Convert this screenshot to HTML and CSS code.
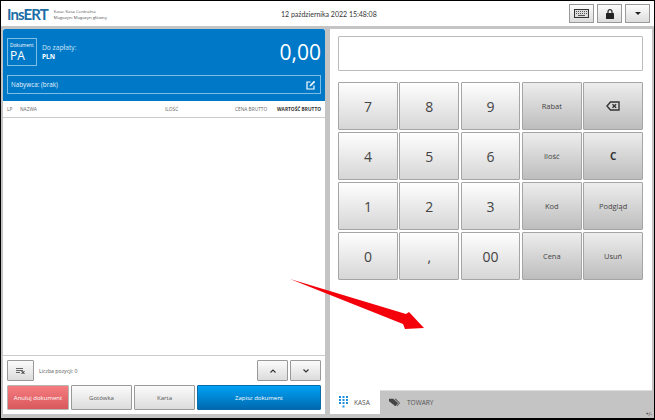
FILE: index.html
```html
<!DOCTYPE html>
<html lang="pl">
<head>
    <meta charset="UTF-8">
    <title>InsERT Kasa</title>
    <link rel="stylesheet" href="styles.css">
</head>
<body>
    <div class="window">
        <header class="topbar">
            <div class="brand">
                <span class="logo">InsERT</span>
                <div class="place">
                    <div>Kasa: Kasa Centralna</div>
                    <div>Magazyn: Magazyn główny</div>
                </div>
            </div>
            <div class="date">12 października 2022 15:48:08</div>
            <div class="top-buttons">
                <button class="top-btn">
                    <svg width="15" height="9" viewBox="0 0 15 9"><rect x="0.5" y="0.5" width="14" height="8" fill="#ddd" stroke="#333"/><path d="M2 2.5h11M2 4.5h11" stroke="#555" stroke-dasharray="1 1"/><path d="M4 6.5h7" stroke="#555"/></svg>
                </button>
                <button class="top-btn">
                    <svg width="8" height="10" viewBox="0 0 8 10"><path d="M2 4V2.7a2 2 0 0 1 4 0V4" fill="none" stroke="#222" stroke-width="1.2"/><rect y="4" width="8" height="6" rx="0.5" fill="#222"/></svg>
                </button>
                <button class="top-btn">
                    <svg width="6" height="3" viewBox="0 0 6 3"><path d="M0 0h6L3 3z" fill="#222"/></svg>
                </button>
            </div>
        </header>

        <div class="main">
            <section class="left">
                <div class="summary">
                    <div class="summary-top">
                        <div class="doc-box">
                            <span class="doc-label">Dokument</span>
                            <span class="doc-type">PA</span>
                        </div>
                        <div class="to-pay">
                            <div>Do zapłaty:</div>
                            <div class="currency">PLN</div>
                        </div>
                        <div class="amount">0,00</div>
                    </div>
                    <div class="buyer">
                        <span>Nabywca: (brak)</span>
                        <svg width="10" height="10" viewBox="0 0 10 10"><path d="M8 5.5V9H1V2h3.5" fill="none" stroke="#fff" stroke-width="1.2"/><path d="M3.5 6.5l.4-1.6L8 .8l1.2 1.2-4.1 4.1z" fill="#fff"/></svg>
                    </div>
                </div>

                <div class="table-head">
                    <span class="col-lp">LP</span>
                    <span class="col-name">NAZWA</span>
                    <span class="col-qty">ILOŚĆ</span>
                    <span class="col-price">CENA BRUTTO</span>
                    <span class="col-value">WARTOŚĆ BRUTTO</span>
                </div>
                <div class="table-body"></div>

                <div class="footer">
                    <div class="footer-row">
                        <button class="btn small-btn">
                            <svg width="9" height="6" viewBox="0 0 9 6"><path d="M0 .5h7M0 2.500h7M0 4.500h4" stroke="#555" stroke-width="0.9"/><path d="M5.500 3l3 3M8.500 3l-3 3" stroke="#222"/></svg>
                        </button>
                        <span class="count">Liczba pozycji: 0</span>
                        <div class="arrows">
                            <button class="btn arrow-btn">
                                <svg width="6" height="4" viewBox="0 0 6 4"><path d="M.5 3.5L3 1l2.5 2.5" fill="none" stroke="#333" stroke-width="1.1"/></svg>
                            </button>
                            <button class="btn arrow-btn">
                                <svg width="6" height="4" viewBox="0 0 6 4"><path d="M.5.5L3 3 5.500.5" fill="none" stroke="#333" stroke-width="1.1"/></svg>
                            </button>
                        </div>
                    </div>
                    <div class="actions">
                        <button class="btn action cancel">Anuluj dokument</button>
                        <button class="btn action">Gotówka</button>
                        <button class="btn action">Karta</button>
                        <button class="btn action save">Zapisz dokument</button>
                    </div>
                </div>
            </section>

            <section class="right">
                <div class="keypad-area">
                    <div class="display"></div>
                    <div class="keypad">
                        <button class="key">7</button>
                        <button class="key">8</button>
                        <button class="key">9</button>
                        <button class="key fn">Rabat</button>
                        <button class="key fn">
                            <svg width="14" height="10" viewBox="0 0 14 10"><path d="M4.500 1H13v8H4.500L1 5z" fill="none" stroke="#333" stroke-width="1.400"/><path d="M6.500 3.200l3.600 3.600M10.100 3.200L6.500 6.800" stroke="#333" stroke-width="1.400"/></svg>
                        </button>
                        <button class="key">4</button>
                        <button class="key">5</button>
                        <button class="key">6</button>
                        <button class="key fn">Ilość</button>
                        <button class="key fn clear">C</button>
                        <button class="key">1</button>
                        <button class="key">2</button>
                        <button class="key">3</button>
                        <button class="key fn">Kod</button>
                        <button class="key fn">Podgląd</button>
                        <button class="key">0</button>
                        <button class="key">,</button>
                        <button class="key">00</button>
                        <button class="key fn">Cena</button>
                        <button class="key fn">Usuń</button>
                    </div>
                </div>
                <div class="tabs">
                    <div class="tab active">
                        <svg width="9" height="12" viewBox="0 0 9 12" fill="#1d8fdc"><rect width="2" height="2"/><rect x="3.500" width="2" height="2"/><rect x="7" width="2" height="2"/><rect y="3" width="2" height="2"/><rect x="3.500" y="3" width="2" height="2"/><rect x="7" y="3" width="2" height="2"/><rect y="6" width="2" height="2"/><rect x="3.500" y="6" width="2" height="2"/><rect x="7" y="6" width="2" height="2"/><rect x="3.500" y="9.500" width="2" height="2"/></svg>
                        <span>KASA</span>
                    </div>
                    <div class="tab">
                        <svg width="11" height="9" viewBox="0 0 12 9" fill="#444"><path d="M0 .5h4.500L10 5 7 8.500 0 3z"/><path d="M6 .5h1.500L12 5 9 8.500 8.300 8 11 5z"/></svg>
                        <span>TOWARY</span>
                    </div>
                    <span class="version">+/-</span>
                </div>
            </section>
        </div>

        <svg class="red-arrow" width="140" height="55" viewBox="0 0 140 55">
            <path d="M0 0L116 35 119 33 134 49 115 50 113 45z" fill="#f4000a"/>
        </svg>
    </div>
</body>
</html>
```

FILE: styles.css
```css
* {
    box-sizing: border-box;
}
html, body {
    margin: 0;
    height: 100%;
}
body {
    background: #000;
    font-family: "Open Sans", sans-serif;
    color: #444;
}
button {
    font-family: inherit;
    padding: 0;
    display: flex;
    align-items: center;
    justify-content: center;
}
.window {
    position: relative;
    width: 653px;
    height: 417px;
    margin: 1px 1px 0 1px;
    background: #c4c4c4;
    display: flex;
    flex-direction: column;
}

/* top bar */
.topbar {
    height: 25px;
    background: #fff;
    display: flex;
    align-items: center;
    padding: 0 4px 0 6px;
    position: relative;
}
.brand {
    display: flex;
    align-items: center;
    gap: 6px;
}
.logo {
    font-family: Lato, sans-serif;
    font-size: 15px;
    font-weight: 700;
    color: #1b6da6;
    letter-spacing: -0.9px;
}
.place {
    font-size: 4.300px;
    line-height: 6px;
    color: #555;
}
.date {
    position: absolute;
    left: 280px;
    font-family: Lato, sans-serif;
    font-size: 7px;
    color: #333;
}
.top-buttons {
    margin-left: auto;
    display: flex;
    gap: 3px;
}
.top-btn {
    width: 25px;
    height: 19px;
    border: 1px solid #999;
    background: linear-gradient(#fdfdfd, #dcdcdc);
}

.main {
    flex: 1;
    display: flex;
    padding: 3px 2px 4px 2px;
    gap: 5px;
}

/* left panel */
.left {
    width: 322px;
    background: #fff;
    display: flex;
    flex-direction: column;
}
.summary {
    height: 72px;
    background: #0078c8;
    border-radius: 2px 2px 0 0;
    padding: 9px 4px 0 4px;
    color: #fff;
}
.summary-top {
    display: flex;
    align-items: center;
    height: 28px;
}
.doc-box {
    width: 30px;
    height: 28px;
    border: 1px solid #7dbde6;
    padding: 3px 0 0 2px;
    display: flex;
    flex-direction: column;
}
.doc-label {
    font-size: 4.800px;
    line-height: 7px;
}
.doc-type {
    font-size: 12px;
    line-height: 14px;
}
.to-pay {
    margin-left: 5px;
    font-size: 6.700px;
    line-height: 9px;
    color: #cfe6f6;
}
.currency {
    font-weight: 700;
    color: #fff;
    font-size: 6.500px;
}
.amount {
    margin-left: auto;
    font-size: 21px;
    line-height: 28px;
    font-weight: 500;
}
.buyer {
    margin-top: 9px;
    height: 19px;
    border: 1px solid #7dbde6;
    display: flex;
    align-items: center;
    justify-content: space-between;
    padding: 0 4px 0 3px;
    font-size: 6.300px;
    color: #e8f3fb;
}
.table-head {
    position: relative;
    height: 17px;
    border-bottom: 1px solid #ccc;
    font-size: 4.800px;
    line-height: 17px;
    color: #666;
}
.table-head span {
    position: absolute;
    top: 0;
}
.col-lp { left: 4px; }
.col-name { left: 17px; }
.col-qty { left: 162px; }
.col-price { left: 232px; }
.col-value {
    right: 4px;
    font-weight: 700;
    color: #333;
}
.table-body {
    flex: 1;
}
.footer {
    border-top: 1px solid #ccc;
    padding: 4px 4px 4px 4px;
}
.footer-row {
    display: flex;
    align-items: center;
    height: 21px;
}
.btn {
    border: 1px solid #999;
    background: linear-gradient(#fbfbfb, #dcdcdc);
    border-radius: 1px;
}
.small-btn {
    width: 27px;
    height: 21px;
}
.count {
    margin-left: 5px;
    font-size: 5.200px;
    color: #555;
}
.arrows {
    margin-left: auto;
    display: flex;
    gap: 2px;
}
.arrow-btn {
    width: 31px;
    height: 21px;
}
.actions {
    display: flex;
    gap: 2px;
    margin-top: 4px;
}
.action {
    width: 61px;
    height: 25px;
    font-size: 6px;
    color: #555;
}
.cancel {
    width: 62px;
    background: linear-gradient(#f57c7f, #d9595c);
    border-color: #b5b5b5;
    color: #fff;
}
.save {
    width: 124px;
    background: linear-gradient(#00a2f5, #0069b0);
    border-color: #0a6ba8;
    color: #fff;
}

/* right panel */
.right {
    flex: 1;
    background: #fff;
    display: flex;
    flex-direction: column;
}
.keypad-area {
    flex: 1;
    padding: 7px 9px 0 8px;
}
.display {
    height: 35px;
    border: 1px solid #bbb;
    border-radius: 1px;
}
.keypad {
    margin-top: 11px;
    display: grid;
    grid-template-columns: repeat(5, 1fr);
    grid-auto-rows: 48px;
    gap: 2px 1.500px;
}
.key {
    border: 1px solid #a5a5a5;
    border-radius: 1px;
    background: linear-gradient(#fefefe, #d6d6d6);
    font-size: 14px;
    color: #444;
}
.fn {
    background: linear-gradient(#ededed, #bdbdbd);
    font-size: 7.500px;
}
.clear {
    font-size: 10px;
    font-weight: 700;
    color: #333;
}
.tabs {
    height: 24px;
    background: #c4c4c4;
    border-top: 1px solid #ddd;
    display: flex;
    position: relative;
}
.tab {
    width: 50px;
    display: flex;
    align-items: center;
    gap: 6px;
    padding-left: 9px;
    font-size: 6.500px;
    color: #555;
}
.tab.active {
    background: #fff;
    margin-top: -1px;
}
.tab + .tab {
    width: auto;
    gap: 7px;
}
.version {
    position: absolute;
    right: 0;
    bottom: -3px;
    font-size: 5px;
    color: #333;
}

/* annotation drawn over the screenshot */
.red-arrow {
    position: absolute;
    left: 289px;
    top: 278px;
}
```
